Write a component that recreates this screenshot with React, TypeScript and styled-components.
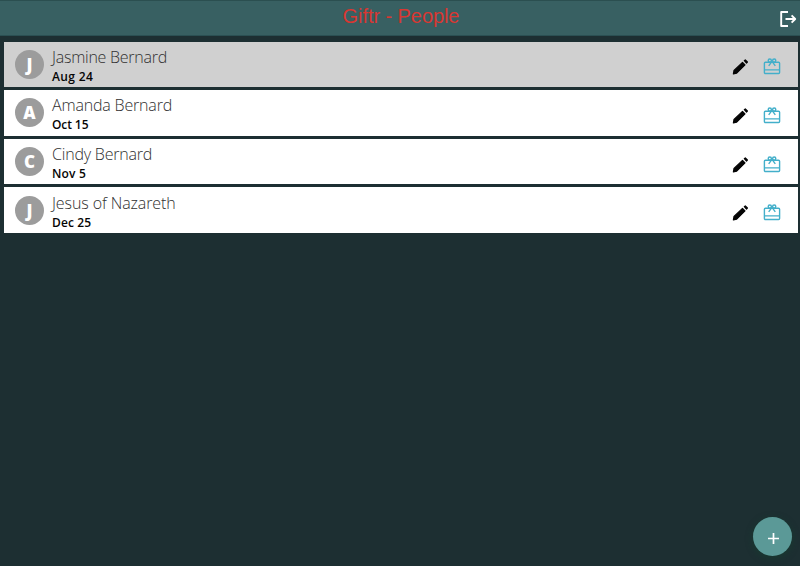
import React from "react";
import styled, { createGlobalStyle } from "styled-components";

const GlobalStyle = createGlobalStyle`
  * { box-sizing: border-box; }
  body { margin: 0; background: #1d2f32; }
  button { border: 0; padding: 0; background: none; font: inherit; color: inherit; }
`;

const Page = styled.div`
  display: flex;
  flex-direction: column;
  height: 566px;
  overflow: hidden;
  font-family: "Open Sans", "Noto Sans", sans-serif;
`;

const Header = styled.header`
  display: grid;
  grid-template-columns: 1fr auto 1fr;
  align-items: center;
  height: 36px;
  padding: 0 2px;
  background: #386062;
  border-top: 1px solid #2b4f50;
  border-bottom: 1px solid #2b5053;
  flex: none;
`;

const Title = styled.h1`
  grid-column: 2;
  margin: 0 0 4px 2px;
  font: 400 20px/24px "Liberation Sans", Arial, sans-serif;
  letter-spacing: -0.07px;
  color: #d93732;
`;

const LogoutButton = styled.button`
  justify-self: end;
  display: flex;
  margin-top: 2px;
  color: #fff;
`;

const PeopleList = styled.ul`
  display: flex;
  flex-direction: column;
  gap: 3.3px;
  margin: 0;
  padding: 5.7px 2px 0 4px;
  list-style: none;
`;

const PersonRow = styled.li<{ $selected?: boolean }>`
  display: flex;
  align-items: center;
  height: 45.3px;
  padding: 0 16px 0 11px;
  background: ${(p) => (p.$selected ? "#d0d0d0" : "#fff")};
`;

const Avatar = styled.div`
  display: grid;
  place-items: center;
  width: 29px;
  height: 29px;
  border-radius: 50%;
  background: #9c9c9c;
  color: #fff;
  font-size: 17px;
  font-weight: 800;
  line-height: 1;
`;

const Details = styled.div`
  flex: 1;
  margin-left: 8px;
  padding-top: 4px;
`;

const Name = styled.div<{ $tracking: number }>`
  font-size: 16px;
  font-weight: 300;
  line-height: 20px;
  letter-spacing: ${(p) => p.$tracking}px;
  color: #303030;
`;

const Birthday = styled.div<{ $tracking: number }>`
  font-size: 12px;
  font-weight: 600;
  line-height: 19px;
  letter-spacing: ${(p) => p.$tracking}px;
  color: #050505;
`;

const Actions = styled.div`
  display: flex;
  align-items: center;
  gap: 12px;
  padding-top: 4px;
`;

const IconButton = styled.button<{ $color: string }>`
  display: flex;
  color: ${(p) => p.$color};
`;

const AddButton = styled.button`
  display: grid;
  place-items: center;
  align-self: flex-end;
  width: 39px;
  height: 39px;
  margin: auto 8px 10px 0;
  border-radius: 50%;
  background: #5b9997;
  color: #fff;
  box-shadow: 0 2px 7px rgba(20, 65, 48, 0.65);

  svg {
    margin: 3px 0 0 1px;
  }
`;

const LogoutIcon = () => (
  <svg width="20" height="20" viewBox="0 0 20 20" fill="none" stroke="currentColor" strokeWidth="1.9">
    <path d="M10 3H3.2v14H10M7.5 10h9.7M13.6 6.4l3.6 3.6-3.6 3.6" strokeLinejoin="round" />
  </svg>
);

const PencilIcon = () => (
  <svg width="20" height="20" viewBox="0 0 20 20" fill="currentColor" stroke="currentColor" strokeWidth="1.2" strokeLinejoin="round">
    <path d="M3.4 17.8l.6-3.3 8.5-8.1 2.5 2.5-8.3 8.3z" />
    <path d="M14.3 4.7l1-.8 2.1 2.1-.9 1z" />
  </svg>
);

const GiftIcon = () => (
  <svg width="20" height="20" viewBox="0 0 20 20" fill="none" stroke="currentColor" strokeWidth="1.4">
    <rect x="2.4" y="6.3" width="15.2" height="11.2" rx="1" />
    <path d="M2.4 13.9h15.2M10 5.3L6.7 9.8M10 5.3l3.3 4.5" />
    <circle cx="7.8" cy="4.6" r="1.6" />
    <circle cx="12.2" cy="4.6" r="1.6" />
  </svg>
);

const people = [
  { name: "Jasmine Bernard", date: "Aug 24", nameTracking: -0.25, dateTracking: 0.38 },
  { name: "Amanda Bernard", date: "Oct 15", nameTracking: -0.18, dateTracking: -0.1 },
  { name: "Cindy Bernard", date: "Nov 5", nameTracking: -0.2, dateTracking: 0.2 },
  { name: "Jesus of Nazareth", date: "Dec 25", nameTracking: -0.1, dateTracking: 0.1 },
];

export default function App() {
  return (
    <Page>
      <GlobalStyle />
      <Header>
        <Title>Giftr - People</Title>
        <LogoutButton aria-label="Log out"><LogoutIcon /></LogoutButton>
      </Header>
      <PeopleList>
        {people.map((person, i) => (
          <PersonRow key={person.name} $selected={i === 0}>
            <Avatar>{person.name[0]}</Avatar>
            <Details>
              <Name $tracking={person.nameTracking}>{person.name}</Name>
              <Birthday $tracking={person.dateTracking}>{person.date}</Birthday>
            </Details>
            <Actions>
              <IconButton $color="#050505" aria-label="Edit"><PencilIcon /></IconButton>
              <IconButton $color="#43afca" aria-label="Gifts"><GiftIcon /></IconButton>
            </Actions>
          </PersonRow>
        ))}
      </PeopleList>
      <AddButton aria-label="Add person">
        <svg width="11" height="11" viewBox="0 0 11 11" stroke="currentColor" strokeWidth="1.7">
          <path d="M5.5 0v11M0 5.5h11" />
        </svg>
      </AddButton>
    </Page>
  );
}
